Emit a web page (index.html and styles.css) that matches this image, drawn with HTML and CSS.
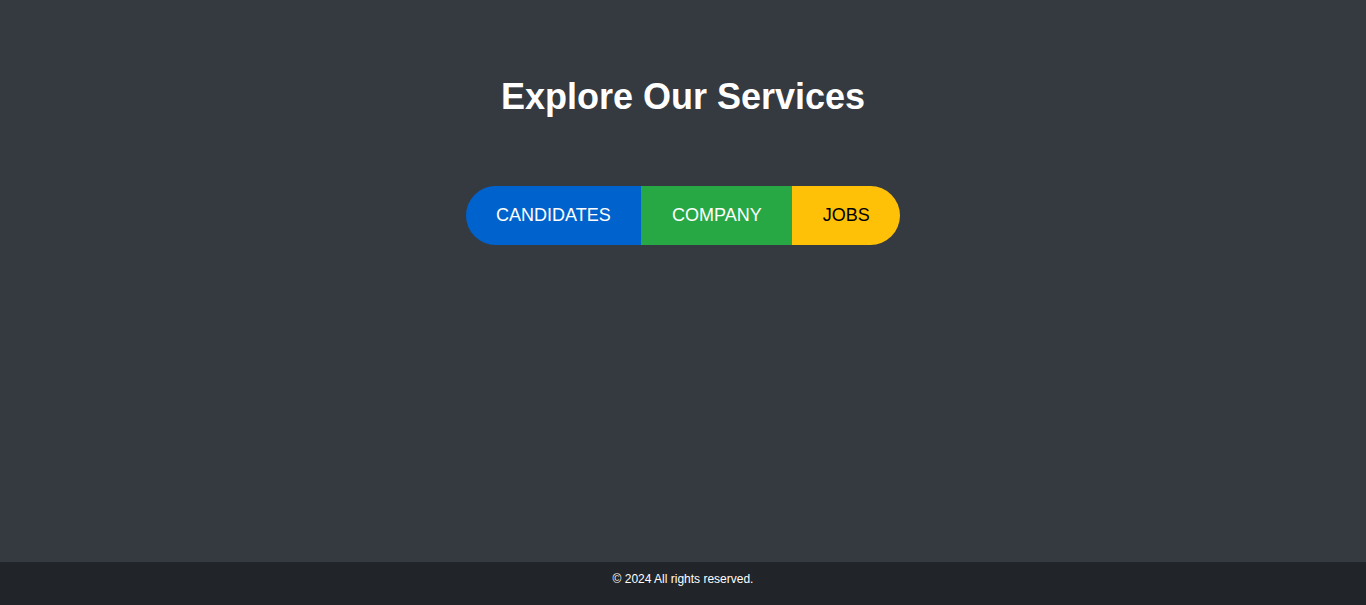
FILE: index.html
```html
<!DOCTYPE html>
<html lang="en">
<head>
<meta charset="utf-8">
<title>Explore Our Services</title>
<link rel="stylesheet" href="styles.css">
</head>
<body>
<div class="page">
  <main class="main">
    <h1 class="title">Explore Our Services</h1>
    <div class="tabs">
      <a class="tab tab-blue" href="#">CANDIDATES</a>
      <a class="tab tab-green" href="#">COMPANY</a>
      <a class="tab tab-yellow" href="#">JOBS</a>
    </div>
  </main>
  <footer class="footer">© 2024 All rights reserved.</footer>
</div>
</body>
</html>
```
FILE: styles.css
```css
html, body {
  margin: 0;
  padding: 0;
}
body {
  font-family: "Liberation Sans", Arial, sans-serif;
  background: #343a40;
  color: #fff;
}
.page {
  display: flex;
  flex-direction: column;
  height: 100vh;
}
.main {
  flex: 1;
  display: flex;
  flex-direction: column;
  align-items: center;
  padding-top: 76px;
}
.title {
  margin: 0;
  font-size: 36px;
  font-weight: bold;
  line-height: 41px;
  color: #fff;
}
.tabs {
  margin-top: 69px;
  display: flex;
  border-radius: 30px;
  overflow: hidden;
}
.tab {
  display: block;
  font-size: 18px;
  line-height: 21px;
  padding: 19px 30.6px;
  text-decoration: none;
  color: #fff;
}
.tab-blue { background: #0062cc; }
.tab-green { background: #28a745; }
.tab-yellow { background: #ffc107; color: #000; }
.footer {
  background: #212529;
  color: #fff;
  text-align: center;
  font-size: 12px;
  line-height: 14px;
  padding: 10px 0 19px;
}
```
